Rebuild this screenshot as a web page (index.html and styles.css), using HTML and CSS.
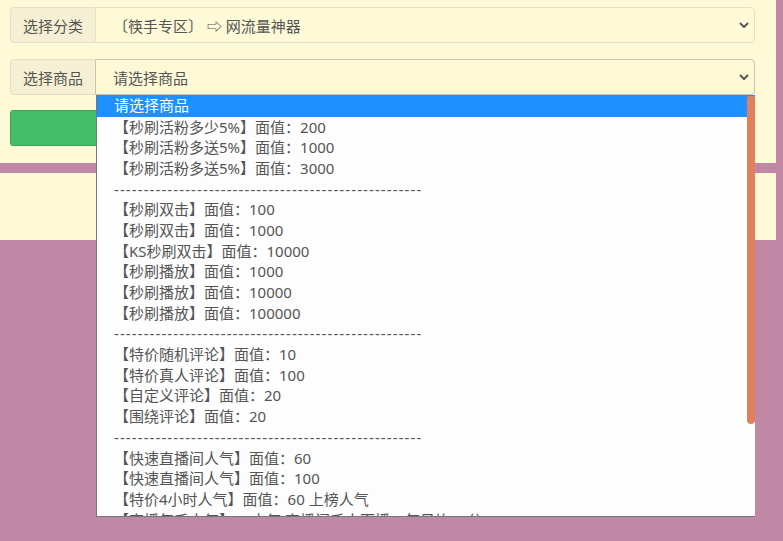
FILE: index.html
```html
<html>
  <head>
    <meta charset="utf-8"/>
    <link rel="stylesheet" href="styles.css">
  </head>
  <body>
    <div class="panel panel-form">
      <div class="form-group">
        <span class="addon">选择分类</span>
        <div class="select">
          <span>〔筷手专区〕 ⇨ 网流量神器</span>
          <svg class="caret" width="10" height="6" viewBox="0 0 10 6"><path d="M1 1l4 4 4-4" fill="none" stroke="#555" stroke-width="2"/></svg>
        </div>
      </div>
      <div class="form-group">
        <span class="addon">选择商品</span>
        <div class="select select-open">
          <span>请选择商品</span>
          <svg class="caret" width="10" height="6" viewBox="0 0 10 6"><path d="M1 1l4 4 4-4" fill="none" stroke="#555" stroke-width="2"/></svg>
        </div>
      </div>
      <button class="btn-buy"></button>
    </div>
    <div class="panel panel-info"></div>

    <ul class="dropdown">
      <li class="active">请选择商品</li>
      <li>【秒刷活粉多少5%】面值：200</li>
      <li>【秒刷活粉多送5%】面值：1000</li>
      <li>【秒刷活粉多送5%】面值：3000</li>
      <li class="sep">----------------------------------------------------</li>
      <li>【秒刷双击】面值：100</li>
      <li>【秒刷双击】面值：1000</li>
      <li>【KS秒刷双击】面值：10000</li>
      <li>【秒刷播放】面值：1000</li>
      <li>【秒刷播放】面值：10000</li>
      <li>【秒刷播放】面值：100000</li>
      <li class="sep">----------------------------------------------------</li>
      <li>【特价随机评论】面值：10</li>
      <li>【特价真人评论】面值：100</li>
      <li>【自定义评论】面值：20</li>
      <li>【围绕评论】面值：20</li>
      <li class="sep">----------------------------------------------------</li>
      <li>【快速直播间人气】面值：60</li>
      <li>【快速直播间人气】面值：100</li>
      <li>【特价4小时人气】面值：60 上榜人气</li>
      <li>【直播年千人气】30人气 直播间千人下播，每日均30分</li>
      <div class="scroll-thumb"></div>
    </ul>
  </body>
</html>
```

FILE: styles.css
```css
html, body {
  margin: 0;
  padding: 0;
}

body {
  width: 783px;
  height: 541px;
  overflow: hidden;
  position: relative;
  background-color: #c088a5;
  font-family: "Noto Sans", "Noto Sans CJK SC", sans-serif;
  font-size: 15px;
  color: #555;
}

.panel {
  width: 776px;
  background-color: #fef9d7;
  box-sizing: border-box;
}

.panel-form {
  height: 163px;
  padding: 7px 21px 0 10px;
}

.panel-info {
  height: 67px;
  margin-top: 10px;
}

.form-group {
  display: flex;
  height: 36px;
  margin-bottom: 16px;
}

.addon {
  display: flex;
  align-items: center;
  justify-content: center;
  width: 85px;
  box-sizing: border-box;
  background-color: #f5f0d3;
  border: 1px solid #e6e0c2;
  border-right: none;
  border-radius: 4px 0 0 4px;
}

.select {
  flex: 1;
  display: flex;
  align-items: center;
  justify-content: space-between;
  padding: 0 5px 0 17px;
  background-color: #fef9d7;
  border: 1px solid #e6e0c2;
  border-radius: 0 4px 4px 0;
}

.select-open {
  border-color: #c9c4ae;
  background-color: #fdf8d5;
}

.caret {
  margin-right: 0;
}

.btn-buy {
  display: block;
  width: 120px;
  height: 36px;
  margin-top: -1px;
  background-color: #45bf67;
  border: 1px solid #35a556;
  border-radius: 3px;
}

.dropdown {
  position: absolute;
  left: 96px;
  top: 95px;
  width: 659px;
  height: 422px;
  margin: 0;
  padding: 0;
  list-style: none;
  overflow: hidden;
  box-sizing: border-box;
  background-color: #fdfdfd;
  border-left: 1px solid #777;
  border-bottom: 1px solid #777;
}

.dropdown li {
  height: 20.7px;
  line-height: 20.7px;
  padding-left: 17px;
  white-space: nowrap;
}

.dropdown li.active {
  height: 21.5px;
  background-color: #1e90ff;
  color: #fff;
}

.dropdown li.sep {
  letter-spacing: 1.1px;
  font-family: "Noto Sans", sans-serif;
  font-size: 15px;
}

.scroll-thumb {
  position: absolute;
  right: 0;
  top: 1px;
  width: 8px;
  height: 328px;
  background-color: #e0805c;
  border-radius: 2px 2px 4px 4px;
}
```
